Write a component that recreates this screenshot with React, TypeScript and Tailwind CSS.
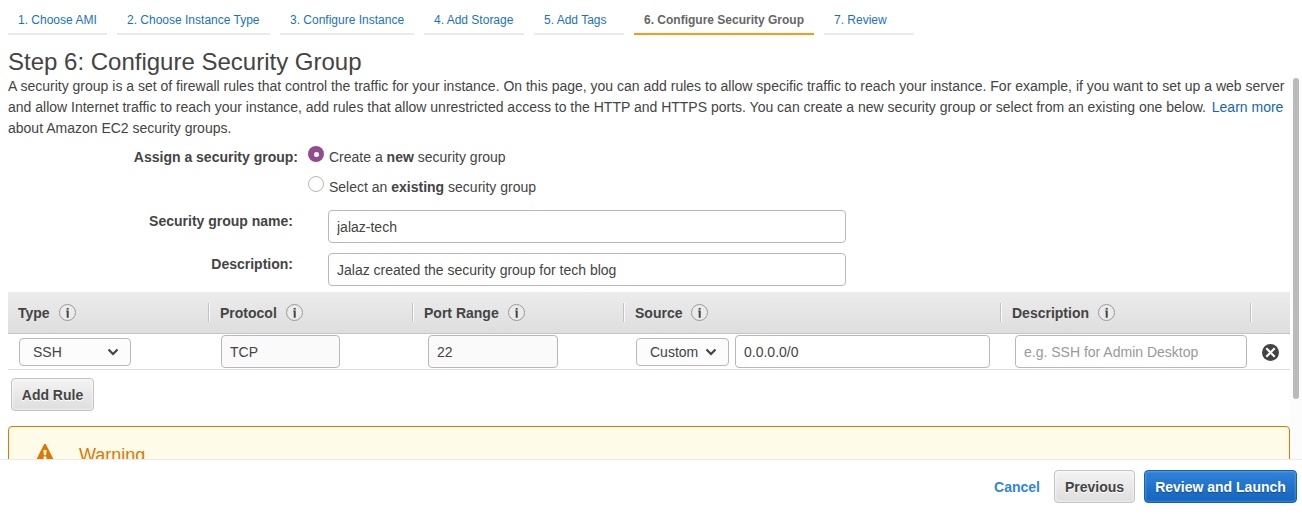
import React from 'react';

const tabs = [
  { label: '1. Choose AMI', width: 'w-[99px]' },
  { label: '2. Choose Instance Type', width: 'w-[153px]' },
  { label: '3. Configure Instance', width: 'w-[134px]' },
  { label: '4. Add Storage', width: 'w-[100px]' },
  { label: '5. Add Tags', width: 'w-[90px]' },
  { label: '6. Configure Security Group', width: 'w-[180px]', active: true },
  { label: '7. Review', width: 'w-[90px]' },
];

const columns = [
  { label: 'Type', width: 'w-[201px]', pad: 'pl-[10px]' },
  { label: 'Protocol', width: 'w-[204px]', pad: 'pl-[11px]' },
  { label: 'Port Range', width: 'w-[211px]', pad: 'pl-[11px]' },
  { label: 'Source', width: 'w-[377px]', pad: 'pl-[11px]' },
  { label: 'Description', width: 'w-[250px]', pad: 'pl-[11px]' },
];

function InfoIcon() {
  return (
    <svg width="17" height="17" viewBox="0 0 17 17" className="shrink-0">
      <circle cx="8.5" cy="8.5" r="8" fill="#ebebeb" stroke="#999" strokeWidth="1" />
      <rect x="7.7" y="4" width="2" height="1.6" fill="#444" />
      <path d="M7.1 6.5h2.6v7.3h-2V7.4h-.6z" fill="#444" />
    </svg>
  );
}

function Chevron() {
  return (
    <svg width="12" height="8" viewBox="0 0 12 8" className="shrink-0">
      <path d="M1.5 1.5 6 6l4.5-4.5" fill="none" stroke="#444" strokeWidth="2.2" />
    </svg>
  );
}

function TextInput({ className, ...props }: React.InputHTMLAttributes<HTMLInputElement>) {
  return (
    <input
      type="text"
      className={`h-[33px] shrink-0 rounded border border-[#b8b8b8] px-2 leading-[21px] text-[#444] outline-none placeholder:text-[#999] ${className ?? ''}`}
      {...props}
    />
  );
}

function Select({ label, className }: { label: string; className: string }) {
  return (
    <button
      type="button"
      className={`flex h-7 shrink-0 items-center justify-between rounded border border-[#b8b8b8] bg-[#fcfcfc] pr-[11px] pl-[13px] ${className}`}
    >
      <span className="leading-[20px]">{label}</span>
      <Chevron />
    </button>
  );
}

const greyButton =
  'h-[33px] shrink-0 rounded border border-[#c3c3c3] bg-linear-to-b from-[#f3f3f3] to-[#dedede] pt-[2px] text-center font-bold text-[#444] shadow-[inset_0_0_2px_1px_rgba(255,255,255,0.55)] [text-shadow:0_1px_0_#fff]';

export default function App() {
  return (
    <div className="flex h-[514px] w-[1302px] flex-col overflow-hidden bg-white font-['Liberation_Sans',Arial,sans-serif] text-[14px] leading-[21px] text-[#444]">
      <nav className="flex h-[35px] shrink-0 gap-[10px] pl-2">
        {tabs.map((tab) => (
          <a
            key={tab.label}
            className={`${tab.width} shrink-0 border-b-2 pt-[11px] pl-[10px] text-xs leading-[18px] whitespace-nowrap ${
              tab.active ? 'border-[#ff9914] font-bold text-[#666]' : 'border-[#eaeaea] text-[#1973bd]'
            }`}
          >
            {tab.label}
          </a>
        ))}
      </nav>

      <h1 className="h-[41px] shrink-0 pt-[11px] pl-2 text-[24px] leading-[32px]">Step 6: Configure Security Group</h1>

      <div className="flex h-[383px] shrink-0 overflow-hidden">
        <main className="flex w-[1290px] shrink-0 flex-col pl-2">
          <p className="h-[63px] shrink-0 whitespace-nowrap">
            A security group is a set of firewall rules that control the traffic for your instance. On this page, you can
            add rules to allow specific traffic to reach your instance. For example, if you want to set up a web server
            <br />
            and allow Internet traffic to reach your instance, add rules that allow unrestricted access to the HTTP and
            HTTPS ports. You can create a new security group or select from an existing one below.{' '}
            <a className="ml-[2px] text-[#1166bb]">Learn more</a>
            <br />
            about Amazon EC2 security groups.
          </p>

          <div className="mt-[7px] flex shrink-0">
            <div className="w-[290px] pt-[1px] text-right font-bold">Assign a security group:</div>
            <div className="ml-[10px] flex flex-col gap-[9px]">
              <label className="flex gap-[5px]">
                <span className="flex size-4 items-center justify-center rounded-full bg-[#924b8c]">
                  <span className="size-[5px] rounded-full bg-white" />
                </span>
                <span className="pt-[1px] whitespace-pre">
                  Create a <b>new</b> security group
                </span>
              </label>
              <label className="flex gap-[5px] pb-[2px]">
                <span className="mt-[-1px] size-4 rounded-full border border-[#b5b5b5] bg-white" />
                <span>
                  Select an <b>existing</b> security group
                </span>
              </label>
            </div>
          </div>

          <div className="mt-[10px] flex shrink-0">
            <div className="w-[285px] pt-[1px] text-right font-bold">Security group name:</div>
            <TextInput className="ml-[35px] w-[518px]" defaultValue="jalaz-tech" />
          </div>
          <div className="mt-[10px] flex shrink-0">
            <div className="w-[285px] pt-[1px] text-right font-bold">Description:</div>
            <TextInput className="ml-[35px] w-[518px]" defaultValue="Jalaz created the security group for tech blog" />
          </div>

          <div className="mt-[6px] flex h-[42px] shrink-0 items-center border-b border-[#c4c4c4] bg-linear-to-b from-[#ececec] to-[#dedede] font-bold">
            {columns.map((col) => (
              <div
                key={col.label}
                className={`flex h-[19px] shrink-0 items-center gap-[9px] border-r border-[#c2c2c2] shadow-[1px_0_0_#fafafa] ${col.width} ${col.pad}`}
              >
                <span className="pt-[2px]">{col.label}</span>
                <InfoIcon />
              </div>
            ))}
          </div>

          <div className="flex h-9 shrink-0 items-center border-b border-[#dcdcdc]">
            <Select label="SSH" className="ml-[11px] w-[112px]" />
            <TextInput className="ml-[90px] w-[119px] bg-[#fafafa]" defaultValue="TCP" />
            <TextInput className="ml-[88px] w-[130px] bg-[#fafafa]" defaultValue="22" />
            <Select label="Custom" className="ml-[78px] w-[93px]" />
            <TextInput className="ml-[6px] w-[255px]" defaultValue="0.0.0.0/0" />
            <TextInput className="ml-[25px] w-[232px]" placeholder="e.g. SSH for Admin Desktop" />
            <button type="button" className="mt-[1px] ml-[15px]">
              <svg width="17" height="17" viewBox="0 0 17 17" className="block">
                <circle cx="8.5" cy="8.5" r="8.5" fill="#444" />
                <path d="m4.3 4.3 8.4 8.4m0-8.4-8.4 8.4" stroke="#fff" strokeWidth="2.1" />
              </svg>
            </button>
          </div>

          <button type="button" className={`mt-2 ml-[3px] w-[83px] ${greyButton}`}>
            Add Rule
          </button>

          <section className="mt-[15px] flex h-[90px] shrink-0 rounded border border-[#e07700] bg-[#fffbe9] pl-[27px] text-[#e07700]">
            <svg width="18" height="17" viewBox="0 0 18 17" className="mt-[17px]">
              <path d="M8.2 0h1.6L18.4 17H-.4z" fill="#e07700" />
              <path d="M7.4 6h3.2l-.5 5.2H7.9zM7.6 12.6h2.8V15H7.6z" fill="#fffbe9" />
            </svg>
            <h2 className="mt-[15px] ml-[25px] text-[18px] leading-[27px]">Warning</h2>
          </section>
        </main>

        <div className="w-3 shrink-0 bg-[#fcfcfc] pt-[2px] pl-[3px]">
          <div className="h-[321px] w-[6px] rounded-full bg-[#bababa]" />
        </div>
      </div>

      <footer className="flex h-[55px] shrink-0 justify-end border-t border-[#eaeaea] pt-[10px] pr-[5px] font-bold">
        <a className="mr-[14px] pt-[7px] text-[#2e86de]">Cancel</a>
        <button type="button" className={`w-[81px] ${greyButton}`}>
          Previous
        </button>
        <button
          type="button"
          className="ml-[9px] h-[33px] w-[153px] rounded border border-[#1463b3] bg-linear-to-b from-[#3083d8] to-[#1264bd] pt-[2px] text-white shadow-[inset_0_0_2px_1px_rgba(255,255,255,0.2)] [text-shadow:0_1px_1px_rgba(0,0,0,0.35)]"
        >
          Review and Launch
        </button>
      </footer>
    </div>
  );
}
